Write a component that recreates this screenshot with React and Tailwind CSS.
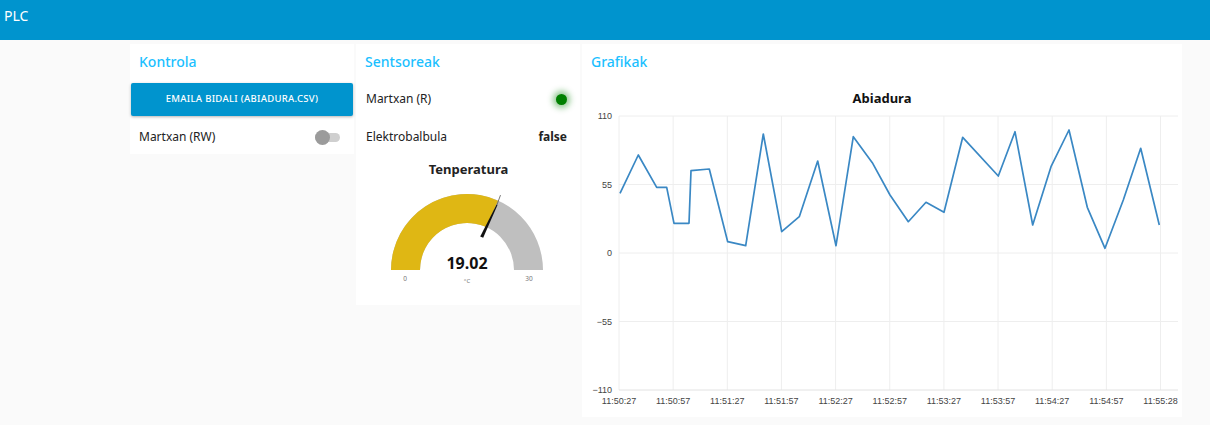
import React from "react";

const font = { fontFamily: '"Noto Sans", "Open Sans", sans-serif' };

const points = [
  [38, 115.3], [56.3, 77], [74.7, 109.3], [84.7, 109.3], [92, 145.3], [107, 145.3],
  [109, 92.7], [127.3, 91], [145.7, 163.7], [163.7, 167.7], [181.3, 56], [199.7, 153.7],
  [217.3, 138.7], [235.7, 83], [254, 167.7], [271.3, 58.7], [290.3, 84.7], [308, 117],
  [326.3, 143.7], [344, 124.3], [362, 134.3], [380.7, 59.3], [416.3, 98], [433, 53.7],
  [450.7, 147], [469, 88.7], [487, 52], [505.3, 129.3], [523, 170.3], [541.3, 122],
  [558.7, 70.3], [577.3, 147],
];

const xTicks = [
  "11:50:27", "11:50:57", "11:51:27", "11:51:57", "11:52:27", "11:52:57",
  "11:53:27", "11:53:57", "11:54:27", "11:54:57", "11:55:28",
];

const yTicks = [
  { label: "110", y: 38 },
  { label: "55", y: 106.5 },
  { label: "0", y: 175 },
  { label: "\u221255", y: 243.5 },
  { label: "\u2212110", y: 312 },
];

const GroupTitle = ({ children }) => (
  <div className="h-[34px] flex items-center pl-[9px] pt-[1px] text-[14px] font-medium text-[#1bbfff]">
    {children}
  </div>
);

const Gauge = () => (
  <svg width="224" height="119" viewBox="0 0 224 119">
    <path d="M35 84 A76 76 0 0 1 187 84 L158 84 A47 47 0 0 0 64 84 Z" fill="#bfbfbf" />
    <path d="M35 84 A76 76 0 0 1 142.03 14.63 L130.19 41.1 A47 47 0 0 0 64 84 Z" fill="#dfb714" />
    <polygon points="127.2,51.8 124.2,50.5 140.6,18.4 141.6,18.8" fill="#111" />
    <line x1="141" y1="18.6" x2="144.5" y2="9.1" stroke="#555" strokeWidth="0.8" />
    <text x="111" y="83" textAnchor="middle" fontSize="16" fontWeight="700" fill="#111" style={font}>
      19.02
    </text>
    <text x="49" y="95" textAnchor="middle" fontSize="6.5" fill="#777" style={font}>0</text>
    <text x="111" y="97" textAnchor="middle" fontSize="6" fill="#777" style={font}>°C</text>
    <text x="173" y="95" textAnchor="middle" fontSize="6.5" fill="#777" style={font}>30</text>
  </svg>
);

const Chart = () => {
  const step = 54.15;
  return (
    <svg width="600" height="339" viewBox="0 0 600 339">
      <text x="300" y="25" textAnchor="middle" fontSize="13" fontWeight="700" fill="#111" style={font}>
        Abiadura
      </text>
      {xTicks.map((t, i) => (
        <line key={t} x1={37 + i * step} y1="38" x2={37 + i * step} y2="312" stroke="#eeeeee" strokeWidth="1" />
      ))}
      {yTicks.map((t) => (
        <line key={t.label} x1="37" y1={t.y} x2="596" y2={t.y} stroke={t.y === 312 ? "#e2e2e2" : "#eeeeee"} strokeWidth="1" />
      ))}
      {yTicks.map((t) => (
        <text
          key={t.label + "l"}
          x="30"
          y={t.y + 3}
          textAnchor="end"
          fontSize="9"
          fill="#444"
          style={{ fontFamily: '"Liberation Sans", Arial, sans-serif' }}
        >
          {t.label}
        </text>
      ))}
      {xTicks.map((t, i) => (
        <text
          key={t + "l"}
          x={37 + i * step}
          y="326"
          textAnchor="middle"
          fontSize="9"
          fill="#444"
          style={{ fontFamily: '"Liberation Sans", Arial, sans-serif' }}
        >
          {t}
        </text>
      ))}
      <polyline
        points={points.map((p) => p.join(",")).join(" ")}
        fill="none"
        stroke="#3a88c4"
        strokeWidth="1.7"
        strokeLinejoin="round"
      />
    </svg>
  );
};

export default function App() {
  return (
    <div className="min-h-[425px] bg-[#fafafa] text-[#222]" style={font}>
      <header className="h-10 bg-[#0094ce] text-white text-[14px] pl-[4px] pt-[6px] leading-[20px]">PLC</header>

      <div className="flex items-start gap-[2px] pl-[130px] pt-1">
        {/* Kontrola */}
        <div className="w-[224px] h-[110px] bg-white flex flex-col">
          <GroupTitle>Kontrola</GroupTitle>
          <button
            type="button"
            className="mt-[5px] mx-[1px] h-[33px] bg-[#0094ce] text-white text-[9.5px] font-medium tracking-[0.3px] uppercase rounded-[2px] shadow-[0_1px_3px_rgba(0,0,0,0.3)]"
          >
            Emaila bidali (abiadura.csv)
          </button>
          <div className="mt-[4px] h-[34px] flex items-center justify-between pl-[9px] pr-[13px] text-[12px]">
            <span>Martxan (RW)</span>
            <div className="relative w-[26px] h-[15px] flex items-center">
              <div className="w-[25px] h-[9px] rounded-full bg-[#cfcfcf]" />
              <div className="absolute left-0 top-0 w-[15px] h-[15px] rounded-full bg-[#9b9b9b]" />
            </div>
          </div>
        </div>

        {/* Sentsoreak */}
        <div className="w-[224px] h-[261px] bg-white flex flex-col">
          <GroupTitle>Sentsoreak</GroupTitle>
          <div className="h-[42px] flex items-center justify-between pl-[10px] pr-[13px] text-[12px]">
            <span>Martxan (R)</span>
            <div className="w-[11px] h-[11px] rounded-full bg-[#008000] shadow-[0_0_6px_3px_rgba(0,128,0,0.45)]" />
          </div>
          <div className="h-[34px] flex items-center justify-between pl-[10px] pr-[13px] text-[12px]">
            <span>Elektrobalbula</span>
            <span className="font-bold">false</span>
          </div>
          <div className="h-[32px] flex items-center justify-center text-[13px] font-bold pl-[1px]">Tenperatura</div>
          <Gauge />
        </div>

        {/* Grafikak */}
        <div className="w-[600px] h-[373px] bg-white flex flex-col">
          <GroupTitle>Grafikak</GroupTitle>
          <Chart />
        </div>
      </div>
    </div>
  );
}
